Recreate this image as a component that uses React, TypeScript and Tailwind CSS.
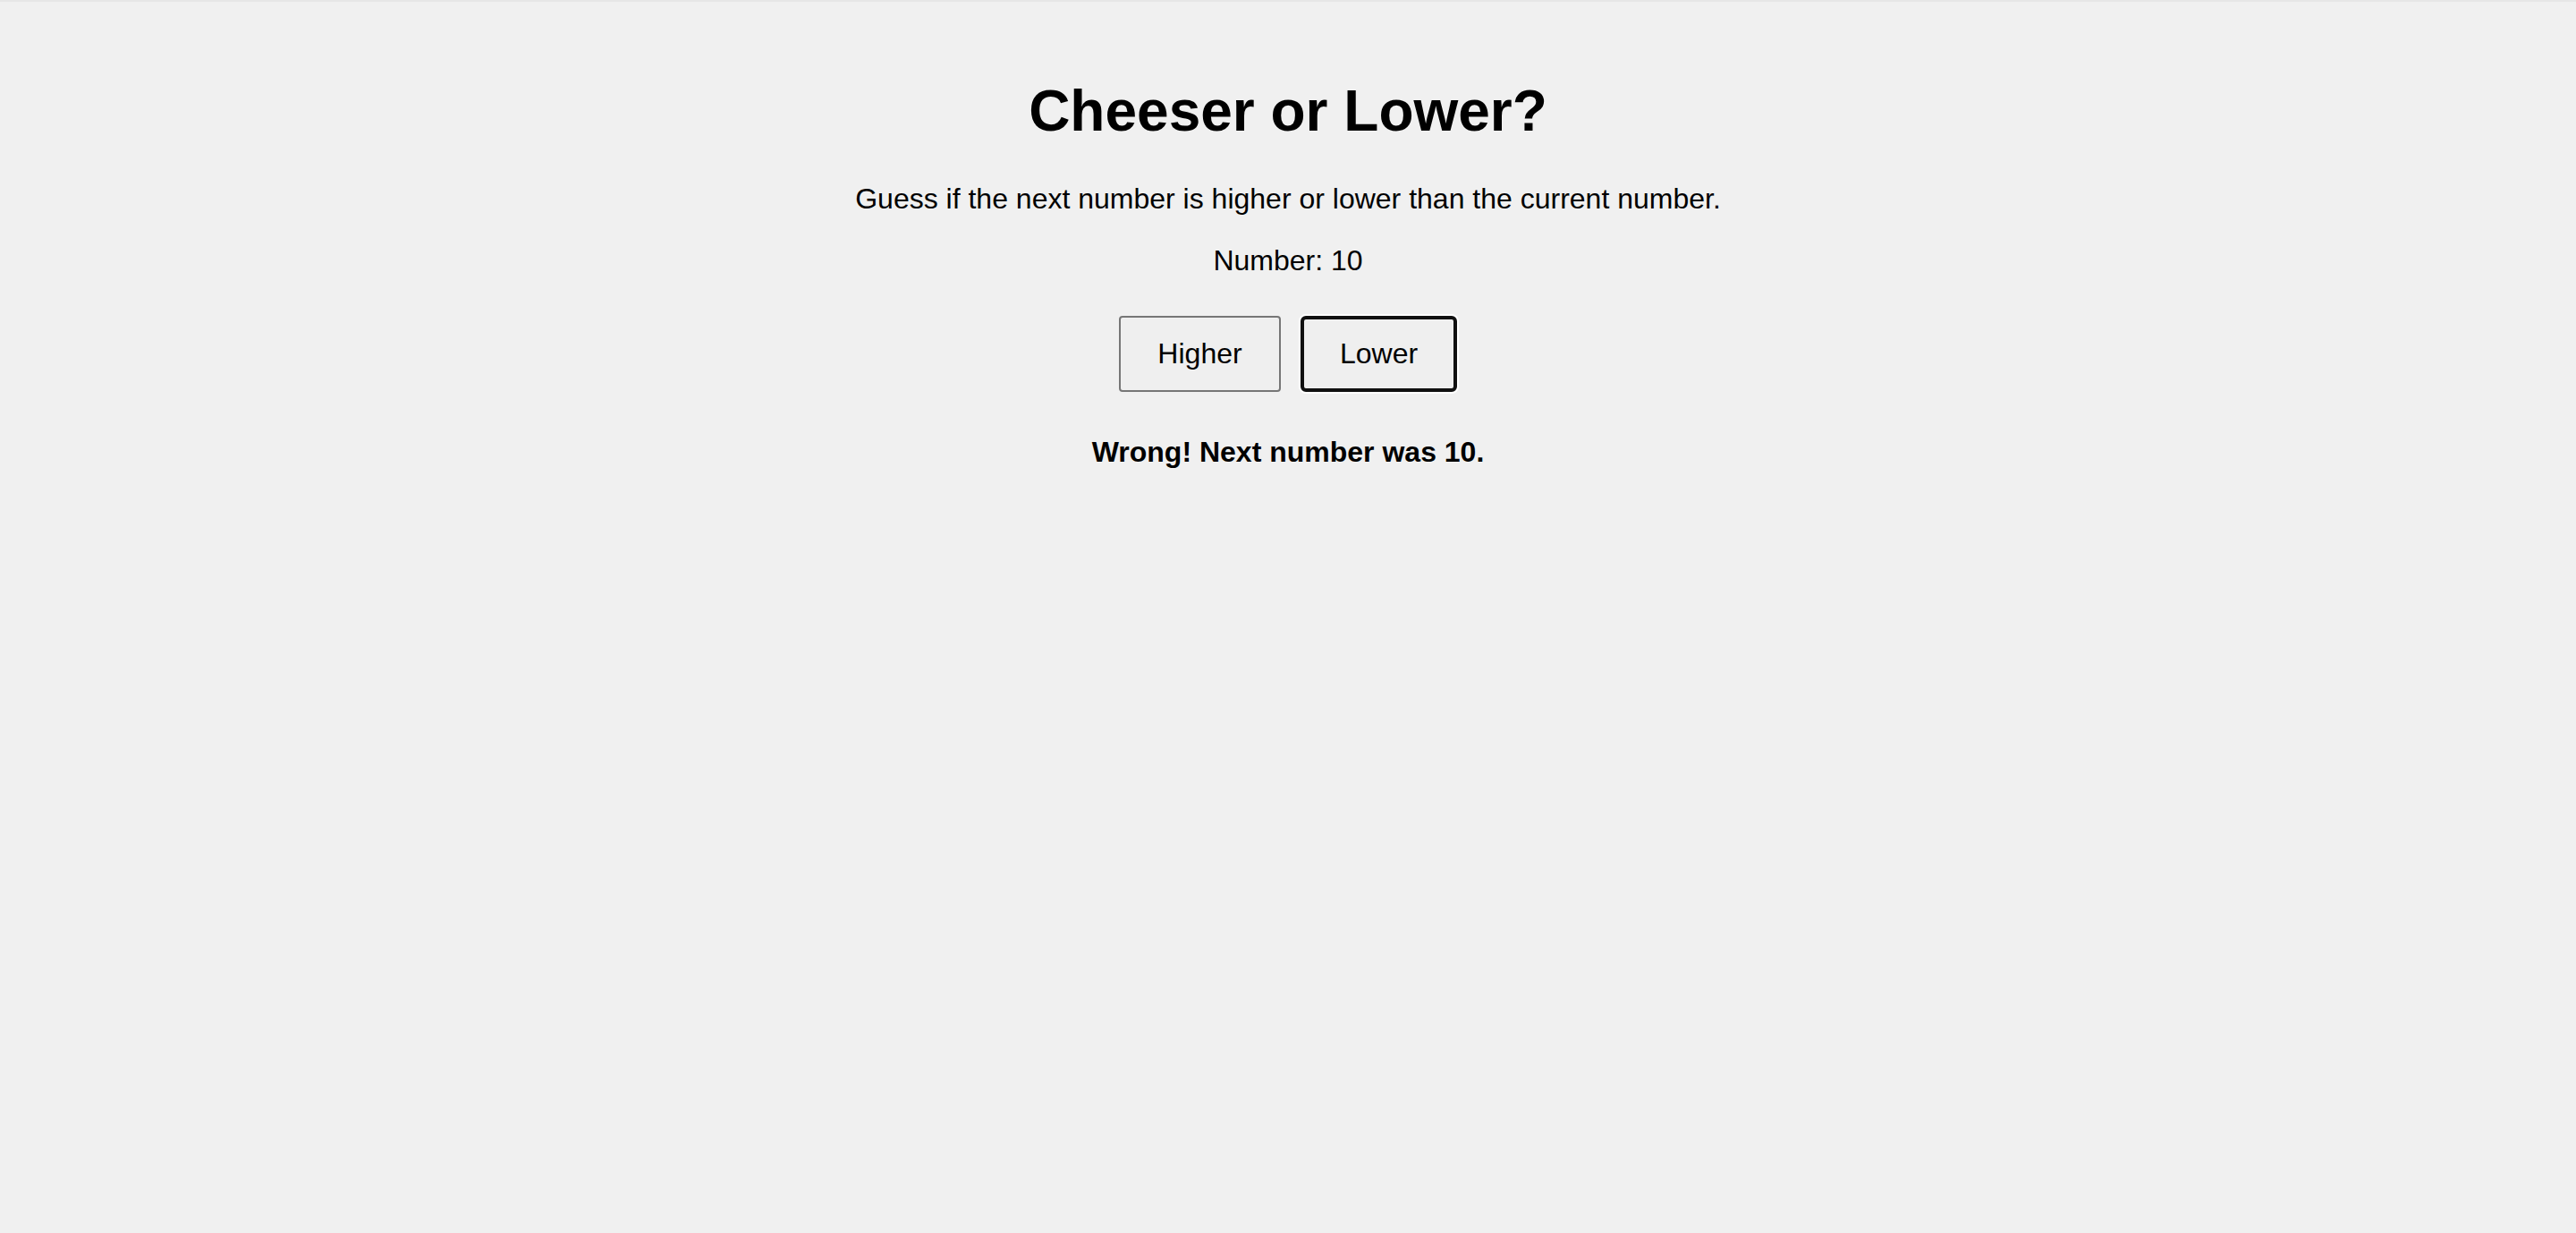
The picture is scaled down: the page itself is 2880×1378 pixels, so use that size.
import { useState } from "react";

const App = () => {
	const [number] = useState(10);
	const [message] = useState("Wrong! Next number was 10.");

	return (
		<div className="h-screen overflow-hidden bg-[#f0f0f0] border-t-2 border-[#e6e6e6] text-black font-['Liberation_Sans',Arial,sans-serif]">
			<div className="flex flex-col items-center pt-[85px] text-center">
				<h1 className="text-[64px] leading-[74px] font-bold">Cheeser or Lower?</h1>
				<p className="mt-[43px] text-[32px] leading-[37px]">
					Guess if the next number is higher or lower than the current number.
				</p>
				<p className="mt-[32px] text-[32px] leading-[37px]">Number: {number}</p>

				<div className="mt-[43px] flex items-center gap-[22px]">
					<button className="w-[181px] h-[85px] flex items-center justify-center border-2 border-[#767676] rounded-[4px] bg-[#efefef] text-[32px] leading-[37px]">
						Higher
					</button>
					<button className="w-[175px] h-[85px] flex items-center justify-center border-4 border-[#101010] rounded-[6px] bg-[#efefef] text-[32px] leading-[37px] shadow-[0_0_0_2px_#ffffff]">
						Lower
					</button>
				</div>

				<p className="mt-[49px] text-[32px] leading-[37px] font-bold">{message}</p>
			</div>
		</div>
	);
};

export default App;
